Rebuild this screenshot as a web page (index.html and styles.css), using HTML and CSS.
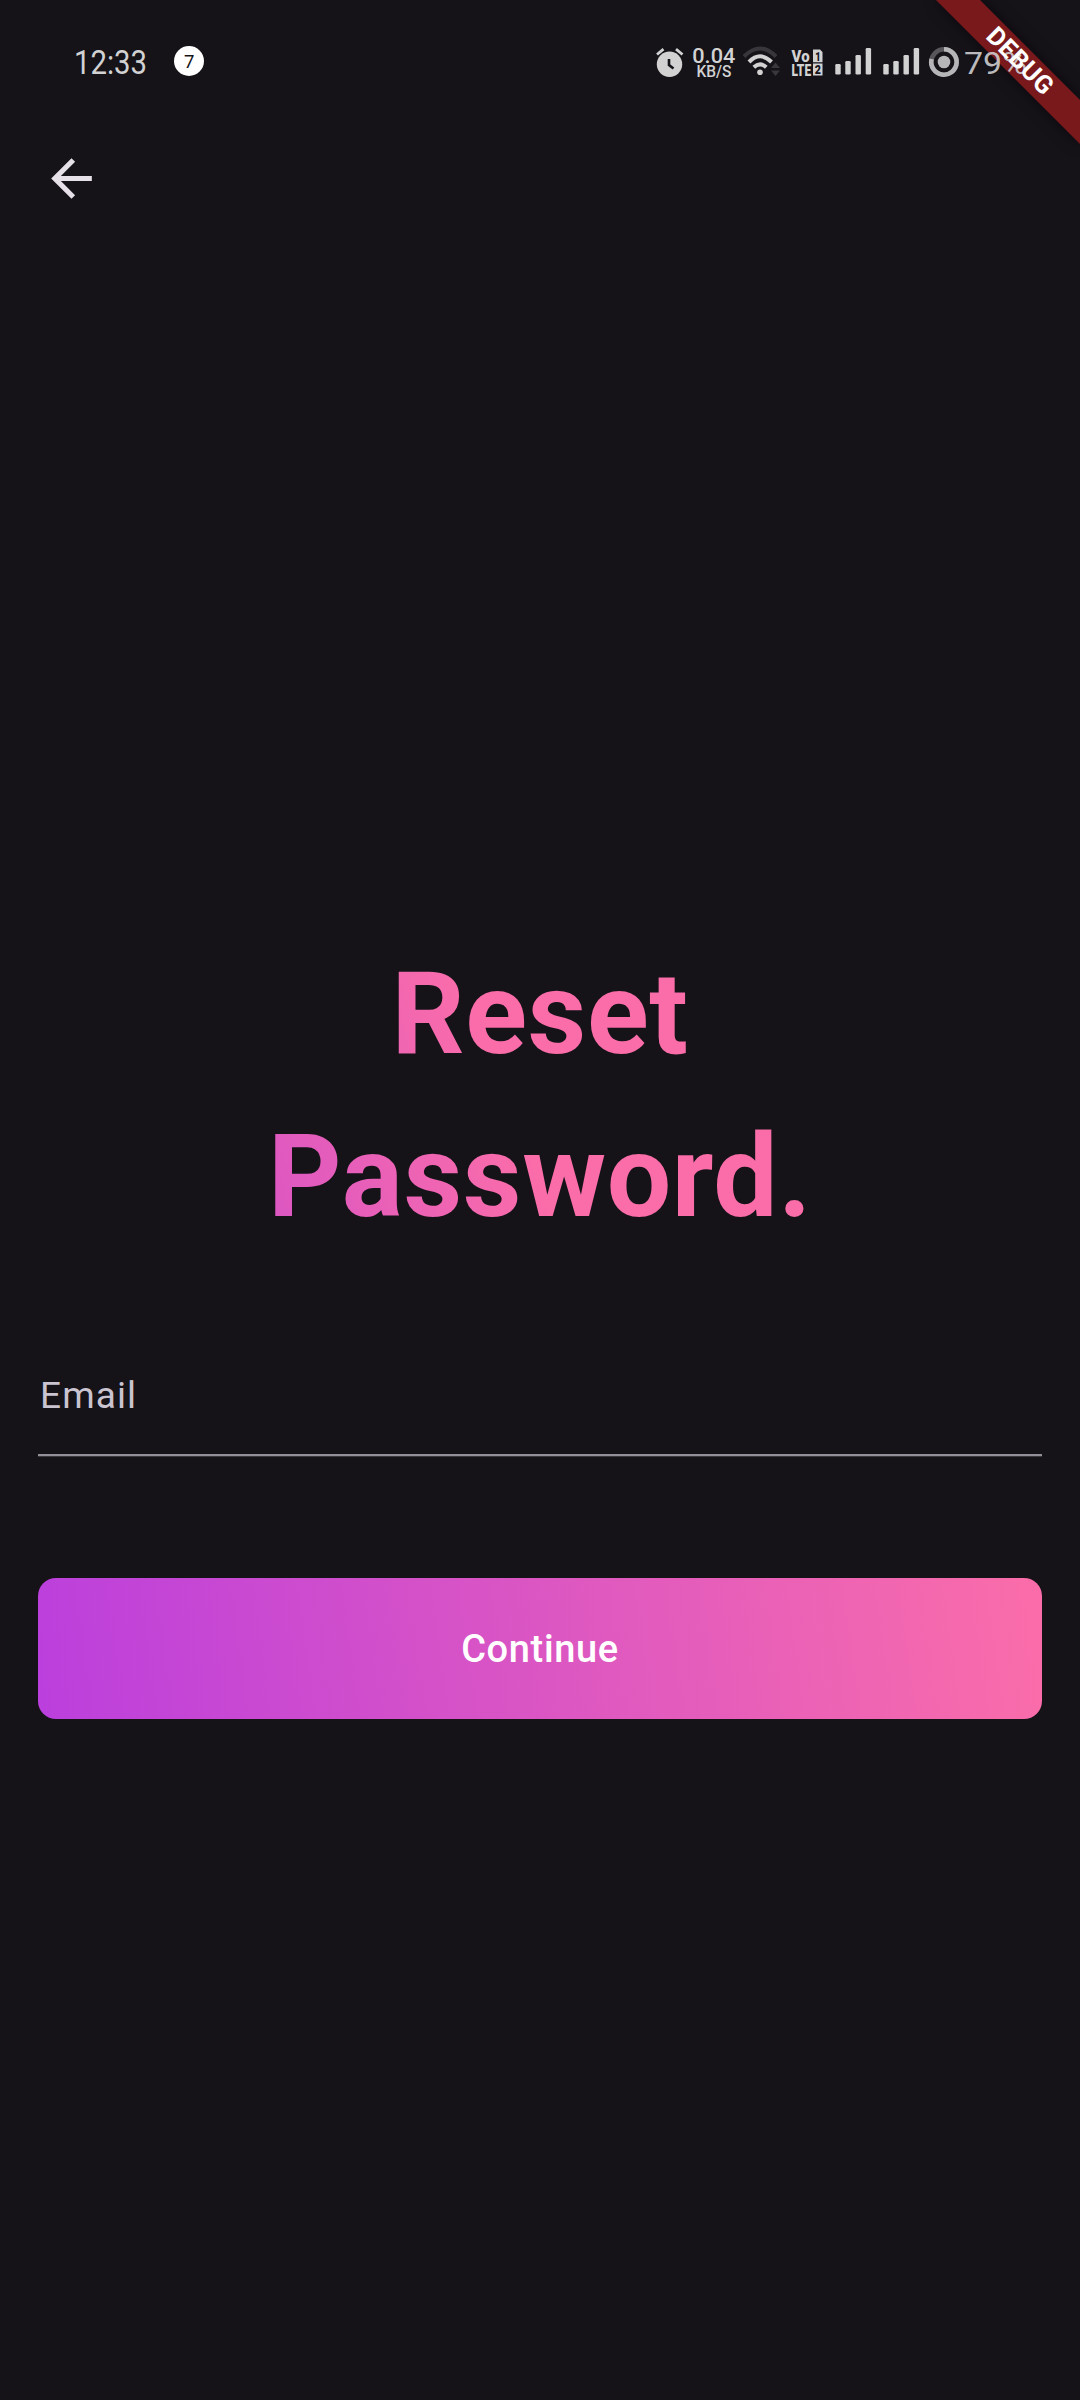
FILE: index.html
```html
<!DOCTYPE html>
<html lang="en">
<head>
<meta charset="utf-8">
<title>Reset Password</title>
<link rel="stylesheet" href="styles.css">
</head>
<body>
<div class="screen">
  <svg class="corner" width="180" height="180" viewBox="900 0 180 180" aria-hidden="true">
    <path class="ribbon" d="M936 0H980L1080 100V144Z"/>
  </svg>

  <header class="status">
    <div class="status-left">
      <svg width="84" height="40" viewBox="70 42 84 40"><text class="st" x="74" y="73.8" font-size="32.5" textLength="73" lengthAdjust="spacingAndGlyphs">12:33</text></svg>
      <svg width="50" height="40" viewBox="154 42 50 40"><circle cx="189" cy="61" r="15" fill="#fff"/><text class="st dark" x="184" y="67.8" font-size="18.5">7</text></svg>
    </div>
    <div class="status-right">
      <svg width="40" height="40" viewBox="650 42 40 40">
        <circle cx="669.5" cy="64.3" r="12.7" fill="#d2d2d3"/>
        <path d="M657 54.5L663.5 49.2M676 49.2L682.5 54.5" stroke="#d2d2d3" stroke-width="2.8" fill="none"/>
        <path d="M669 59V65L673.5 68.5" stroke="#151218" stroke-width="2.6" fill="none"/>
      </svg>
      <svg width="50" height="40" viewBox="690 42 50 40">
        <text class="st mid" x="692.3" y="63.4" font-size="20.6" textLength="43" lengthAdjust="spacingAndGlyphs">0.04</text>
        <text class="st mid" x="696.4" y="77.4" font-size="16.3" textLength="35" lengthAdjust="spacingAndGlyphs">KB/S</text>
      </svg>
      <svg width="46" height="40" viewBox="740 42 46 40" fill="none" stroke="#d2d2d3" stroke-width="4">
        <path d="M744 56.5Q760 40.5 776 56.5" stroke="#38363b"/>
        <path d="M749 62Q760 50.5 771.5 62M753.8 67.3Q760 61.5 766.3 67.3"/>
        <circle cx="760" cy="72.3" r="2.8" fill="#d2d2d3" stroke="none"/>
        <path d="M775.5 62.5L780 68H771ZM775.5 76L780 70.5H771Z" fill="#39373c" stroke="none"/>
      </svg>
      <svg width="44" height="40" viewBox="786 42 44 40">
        <text class="st heavy" x="791.6" y="62" font-size="16.4" textLength="18" lengthAdjust="spacingAndGlyphs">Vo</text>
        <text class="st heavy" x="791.6" y="75.6" font-size="16.4" textLength="19.5" lengthAdjust="spacingAndGlyphs">LTE</text>
        <path d="M813 49.5H820L822.5 52V62.3H813ZM813 63.5H822.5V75.6H813Z" fill="#d2d2d3"/>
        <text class="st heavy dark" x="815.2" y="60.6" font-size="13" textLength="5.4" lengthAdjust="spacingAndGlyphs">1</text>
        <text class="st heavy dark" x="814.7" y="74.2" font-size="13" textLength="6.2" lengthAdjust="spacingAndGlyphs">2</text>
      </svg>
      <svg width="48" height="40" viewBox="830 42 48 40" fill="#d2d2d3">
        <rect x="835.3" y="64" width="5.4" height="10.5" rx="1.3"/><rect x="845.3" y="61" width="5.4" height="13.5" rx="1.3"/><rect x="855.5" y="55" width="5.4" height="19.5" rx="1.3"/><rect x="865.7" y="48" width="5.4" height="26.5" rx="1.3"/>
      </svg>
      <svg width="48" height="40" viewBox="878 42 48 40" fill="#d2d2d3">
        <rect x="883.3" y="64" width="5.4" height="10.5" rx="1.3"/><rect x="893.3" y="61" width="5.4" height="13.5" rx="1.3"/><rect x="903.5" y="55" width="5.4" height="19.5" rx="1.3"/><rect x="913.7" y="48" width="5.4" height="26.5" rx="1.3"/>
      </svg>
      <svg width="36" height="40" viewBox="926 42 36 40" fill="none" stroke-width="4.6">
        <circle cx="944" cy="62" r="12.7" stroke="#58565b"/>
        <path d="M944 49.3A12.7 12.7 0 1 1 931.6 59" stroke="#b6b5b7"/>
        <circle cx="944" cy="62" r="6.3" fill="#b6b5b7"/>
      </svg>
      <svg width="70" height="40" viewBox="962 42 70 40"><text class="st faded" x="964" y="73.5" font-size="32" textLength="63" lengthAdjust="spacingAndGlyphs">79%</text></svg>
    </div>
  </header>

  <svg class="corner" width="180" height="180" viewBox="900 0 180 180">
    <text class="debug" transform="translate(1020.3 60.7) rotate(45)" x="0" y="8.8" text-anchor="middle" textLength="83">DEBUG</text>
  </svg>

  <nav class="appbar">
    <svg class="back" viewBox="0 0 24 24" role="img" aria-label="Back"><path d="M20 11H7.83l5.59-5.59L12 4l-8 8 8 8 1.41-1.41L7.83 13H20v-2z" fill="#e6e0e9"/></svg>
  </nav>

  <main class="content">
    <h1 class="title">Reset<br>Password.</h1>
    <div class="field">Email</div>
    <button class="cta">Continue</button>
  </main>
</div>
</body>
</html>
```
FILE: styles.css
```css
body {
  margin: 0;
  background: #151218;
}

.screen {
  position: relative;
  box-sizing: border-box;
  width: 1080px;
  height: 2400px;
  overflow: hidden;
  background: #151218;
  font-family: Roboto, sans-serif;
}

.corner {
  position: absolute;
  top: 0;
  right: 0;
}

.ribbon {
  fill: #7a191b;
  filter: drop-shadow(0 0 7px rgba(0, 0, 0, 0.5));
}

.debug {
  fill: #fff;
  font-size: 25.5px;
  font-weight: 700;
}

.status {
  position: relative;
  display: flex;
  justify-content: space-between;
  padding: 42px 48px 0 70px;
  height: 82px;
  box-sizing: border-box;
}

.status-left,
.status-right {
  display: flex;
}

.status svg {
  display: block;
}

.st {
  fill: #d2d2d3;
}

.mid {
  font-weight: 500;
}

.heavy {
  font-weight: 900;
}

.dark {
  fill: #151218;
}

.faded {
  fill: #d2d2d3;
  fill-opacity: 0.9;
}

.appbar {
  display: flex;
  align-items: center;
  height: 143px;
  margin-top: 25px;
  padding-left: 41px;
}

.back {
  width: 61px;
  height: 61px;
}

.content {
  padding: 683px 38px 0;
}

.title {
  margin: 0 0 49px;
  font-size: 114.3px;
  line-height: 163px;
  font-weight: 700;
  letter-spacing: 0.6px;
  text-align: center;
  color: transparent;
  background: linear-gradient(70.7deg, #bb3fdd -50px, #fb6da9 500px);
  background-clip: text;
  -webkit-background-clip: text;
}

.field {
  box-sizing: border-box;
  height: 148px;
  padding: 63px 2px 0;
  border-bottom: 2px solid #938f99;
  box-shadow: 0 1px rgba(147, 143, 153, 0.3);
  color: #cac4d0;
  font-size: 37px;
  line-height: 50px;
  letter-spacing: 1.1px;
}

.cta {
  display: block;
  width: 100%;
  height: 141px;
  margin: 122px 0 0;
  padding: 0;
  border: 0;
  border-radius: 18px;
  background: linear-gradient(82deg, #bb3fdd, #fb6da9);
  color: #fff;
  font: 500 38px/142px Roboto, sans-serif;
  letter-spacing: 0.65px;
}
```
